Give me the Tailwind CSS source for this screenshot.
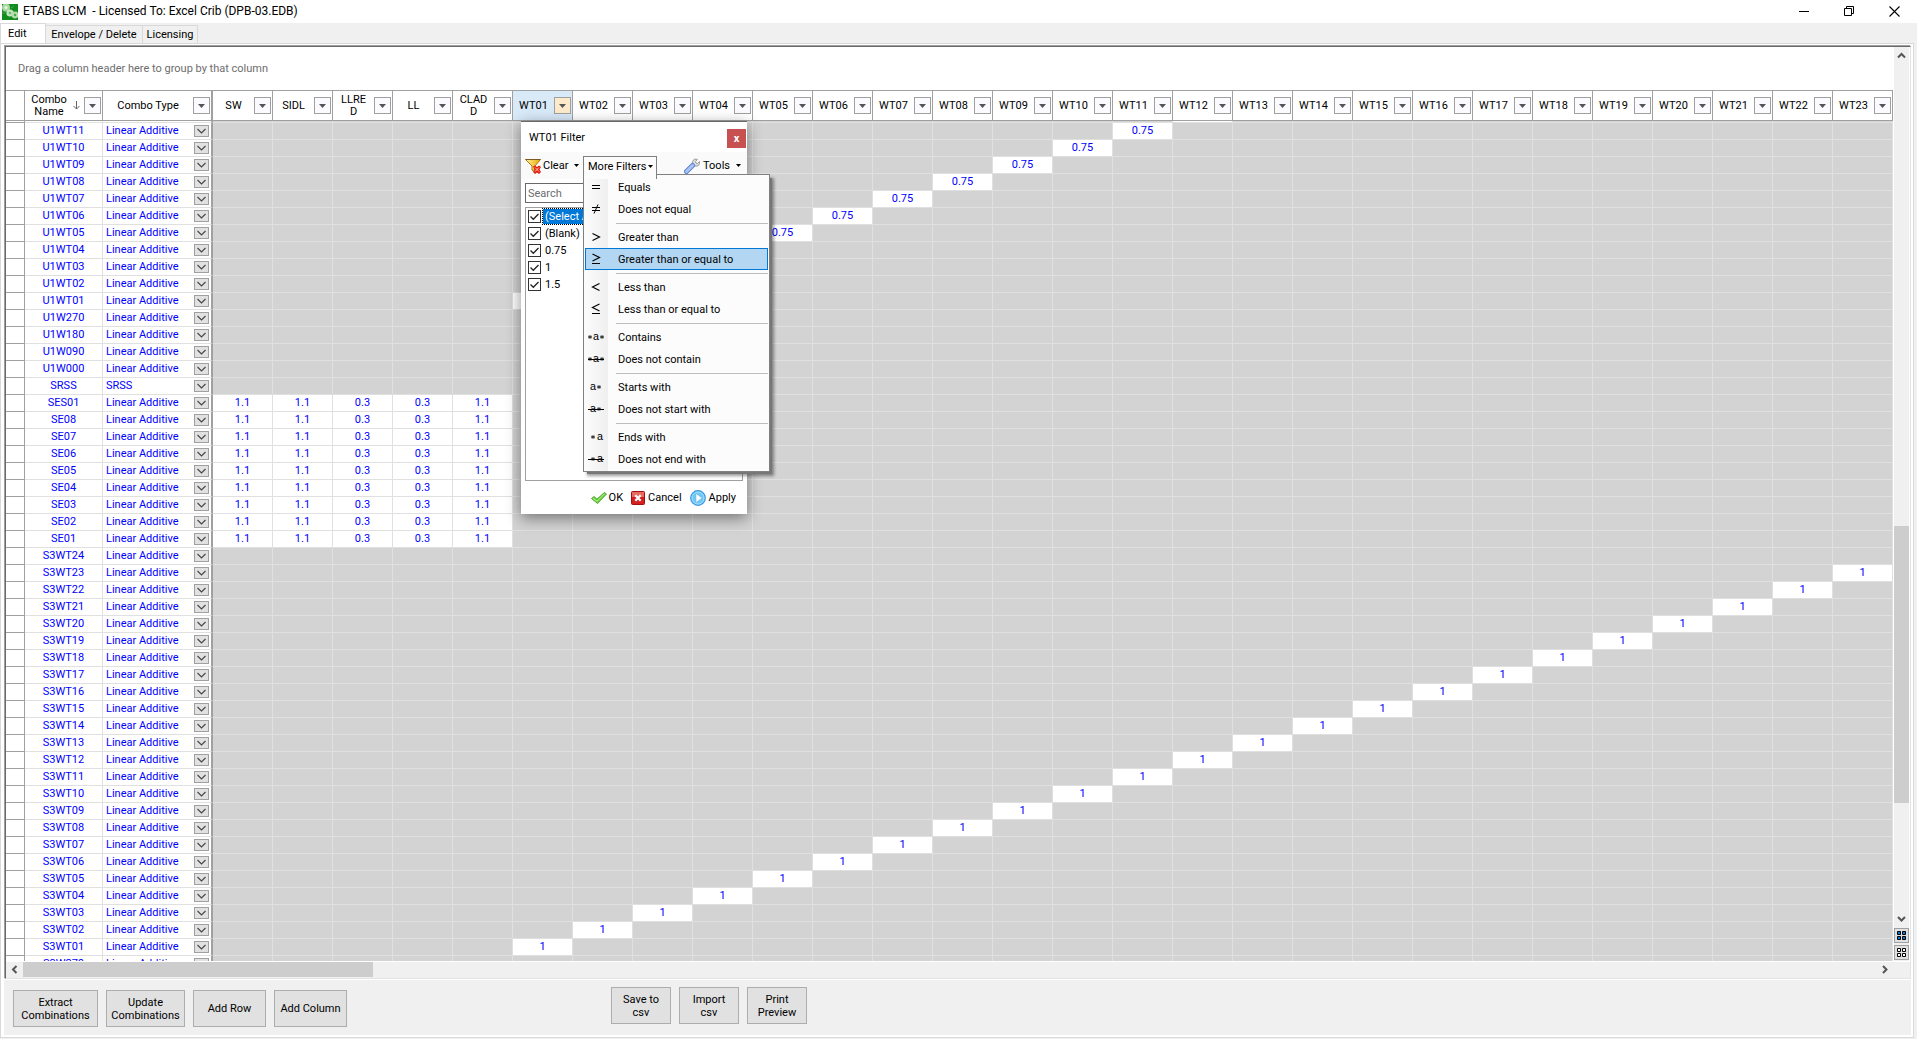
<!DOCTYPE html>
<html lang="en">
<head>
    <meta charset="UTF-8">
    <meta name="viewport" content="width=device-width, initial-scale=1.0">
    <title>ETABS LCM</title>
    <script src="https://cdn.jsdelivr.net/npm/@tailwindcss/browser@4"></script>
</head>
<body class="h-screen flex flex-col overflow-hidden bg-[#f0f0f0] text-black text-[11px] leading-[13px] font-['Roboto','Liberation_Sans',sans-serif]">

    <!-- title bar -->
    <header class="h-[23px] shrink-0 bg-white flex items-center text-[12px]">
        <svg class="ml-0.5 w-4 h-4" viewBox="0 0 16 16">
            <rect width="16" height="16" fill="#128c1e"/>
            <circle cx="4" cy="3.5" r="4" fill="#a8d8a0"/><circle cx="8" cy="9" r="3.6" fill="#c4e6be"/><circle cx="13" cy="11" r="3.4" fill="#b4dcac"/>
            <circle cx="4" cy="3.5" r="1.6" fill="#e4f5e0"/><circle cx="8" cy="9" r="1.3" fill="#6ab866"/><circle cx="13" cy="11" r="1.2" fill="#4aa64a"/>
            <path d="M0 8h3v1H0zM9 4l3-2" stroke="#4aa64a"/>
        </svg>
        <h1 class="ml-[5px] whitespace-pre">ETABS LCM  - Licensed To: Excel Crib (DPB-03.EDB)</h1>
        <div class="ml-auto flex items-center">
            <button aria-label="Minimize" class="w-[45px] h-5 flex items-center justify-center"><svg class="w-[11px] h-[11px]" viewBox="0 0 11 11"><path d="M0 5.5h10" stroke="#000"/></svg></button>
            <button aria-label="Restore" class="w-[45px] h-5 flex items-center justify-center"><svg class="w-[11px] h-[11px]" viewBox="0 0 11 11" fill="none" stroke="#000"><path d="M.5 2.5h7v7h-7zM2.5 2.5v-2h7v7h-2"/></svg></button>
            <button aria-label="Close" class="w-[45px] h-5 flex items-center justify-center"><svg class="w-[11px] h-[11px]" viewBox="0 0 11 11"><path d="M.5.5l10 10M10.5.5l-10 10" stroke="#000" stroke-width="1.1"/></svg></button>
        </div>
    </header>

    <!-- tabs -->
    <nav class="h-5 shrink-0 flex items-end">
        <button class="h-5 w-[46px] bg-white border-l border-t border-r border-[#d9d9d9] pl-[7px] pb-px text-left">Edit</button>
        <button class="h-[18px] w-[97px] border-t border-r border-[#d9d9d9]">Envelope / Delete</button>
        <button class="h-[18px] w-[55px] border-t border-r border-[#d9d9d9]">Licensing</button>
    </nav>

    <main class="flex-1 min-h-0 flex flex-col mr-[3px] mb-px bg-[#f0f0f0] border border-[#d9d9d9]">
        <div class="flex-1 min-h-0 flex flex-col border-3 border-t-1 border-r-2 border-b-2 border-white">

            <!-- grid -->
            <section class="relative flex-1 min-h-0 flex flex-col mt-px ml-px border-l border-t border-[#696969] border-r border-b border-r-[#e3e3e3] border-b-[#e3e3e3] shadow-[-1px_-1px_0_#a0a0a0] bg-white">
                <div class="flex-1 min-h-0 flex">
                    <div class="flex-1 min-w-0 overflow-hidden">
                        <div class="h-[43px] flex items-center pl-3 text-[#6d6d6d]">Drag a column header here to group by that column</div>
                        <table class="table-fixed border-separate border-spacing-0 w-[1887px]">
                            <colgroup id="cols"></colgroup>
                            <thead id="head"></thead>
                            <tbody id="rows"></tbody>
                        </table>
                    </div>
                    <!-- vertical scroll bar -->
                    <div class="w-[17px] shrink-0 border-x border-white bg-[#f0f0f0] flex flex-col">
                        <button aria-label="Scroll up" class="h-[17px] flex items-center justify-center"><svg class="w-[9px] h-[9px]" viewBox="0 0 9 9"><path d="M1 6.5L4.500 3 8 6.500" fill="none" stroke="#555" stroke-width="2"/></svg></button>
                        <div class="grow-[462] basis-0"></div>
                        <div class="grow-[277] basis-0 bg-[#cdcdcd]"></div>
                        <div class="grow-[107] basis-0"></div>
                        <button aria-label="Scroll down" class="h-[17px] flex items-center justify-center"><svg class="w-[9px] h-[9px]" viewBox="0 0 9 9"><path d="M1 3l3.500 3.500L8 3" fill="none" stroke="#555" stroke-width="2"/></svg></button>
                        <button aria-label="Split view" class="h-[15px] mt-px border border-[#a0a0a0] bg-[#e1e1e1] flex items-center justify-center"><svg class="w-[9px] h-[9px]" viewBox="0 0 9 9"><path d="M.5.5h3v3h-3zM5.500.5h3v3h-3zM.5 5.500h3v3h-3zM5.500 5.500h3v3h-3z" fill="#0078d7" stroke="#000"/></svg></button>
                        <button aria-label="Single view" class="h-[15px] mt-0.5 mb-px border border-[#a0a0a0] bg-[#e1e1e1] flex items-center justify-center"><svg class="w-[9px] h-[9px]" viewBox="0 0 9 9"><path d="M.5.5h3v3h-3zM5.500.5h3v3h-3zM.5 5.500h3v3h-3zM5.500 5.500h3v3h-3z" fill="#fff" stroke="#000"/></svg></button>
                    </div>
                </div>
                <!-- horizontal scroll bar -->
                <div class="h-[17px] shrink-0 pb-px border-t border-white bg-[#f0f0f0] flex">
                    <button aria-label="Scroll left" class="w-[17px] flex items-center justify-center"><svg class="w-[9px] h-[9px]" viewBox="0 0 9 9"><path d="M6.500 1L3 4.500 6.500 8" fill="none" stroke="#555" stroke-width="2"/></svg></button>
                    <div class="grow-[350] basis-0 bg-[#cdcdcd]"></div>
                    <div class="grow-[1503] basis-0"></div>
                    <button aria-label="Scroll right" class="w-[17px] mr-[17px] flex items-center justify-center"><svg class="w-[9px] h-[9px]" viewBox="0 0 9 9"><path d="M3 1l3.500 3.500L3 8" fill="none" stroke="#555" stroke-width="2"/></svg></button>
                </div>

                <!-- WT01 filter popup -->
                <div class="absolute left-[515px] top-[74px] w-[226px] h-[393px] flex flex-col bg-white border-t border-[#696969] shadow-[0_4px_14px_rgba(0,0,0,0.45)]">
                    <div class="h-[30px] shrink-0 flex items-center justify-between pl-2 pr-px">
                        <h2>WT01 Filter</h2>
                        <button aria-label="Close filter" class="w-[19px] h-[19px] mt-0.5 bg-[#c75050] text-white font-bold leading-none">x</button>
                    </div>
                    <div class="h-[27px] shrink-0 flex items-center bg-[#fafafa]">
                        <button class="flex items-center ml-1 w-[54px]">
                            <svg class="w-4 h-4" viewBox="0 0 16 16">
                                <defs><linearGradient id="fun"><stop offset="0" stop-color="#fff3a0"/><stop offset="1" stop-color="#e8a800"/></linearGradient></defs>
                                <path d="M.5 1.500h15L10 8v6L7 12V8z" fill="url(#fun)" stroke="#b07818"/>
                                <path d="M.5 1.500h15" stroke="#7a5a20"/>
                                <path d="M8 8.500l2-1 2 1.500 2-1.500 2 1.500-1.500 2.500L16 14l-2 2-2-1.500L10 16l-2-2 1.500-2.500z" fill="#e02010"/>
                                <path d="M10 9.500l4 4M14 9.500l-4 4" stroke="#ffc0b0"/>
                            </svg>
                            <span class="ml-0.5">Clear</span>
                            <svg class="ml-auto w-[5px] h-[3px]" viewBox="0 0 5 3"><path d="M0 0h5L2.500 3z"/></svg>
                        </button>
                        <button aria-expanded="true" class="relative z-20 flex items-center self-end ml-1 w-[74px] h-[23px] pl-1 pb-1 bg-[#fcfcfc] border border-b-0 border-[#808080] whitespace-nowrap">
                            More Filters
                            <svg class="ml-auto mr-[3px] w-[5px] h-[3px]" viewBox="0 0 5 3"><path d="M0 0h5L2.500 3z"/></svg>
                        </button>
                        <button class="flex items-center ml-auto mr-[6px]">
                            <svg class="w-4 h-4" viewBox="0 0 16 16">
                                <path d="M9.500 7a3.500 3.500 0 0 1 2.500-6l1.500.5-2 2 .5 1.500 1.500.5 2-2a3.500 3.500 0 0 1-4.500 4.500z" fill="#dcdcdc" stroke="#8c8c8c" stroke-width=".8"/>
                                <path d="M2.500 13.500l6-6" stroke="#5f86cf" stroke-width="5" stroke-linecap="round"/>
                                <path d="M2.500 13.500l6-6" stroke="#a9c5f5" stroke-width="3" stroke-linecap="round"/>
                            </svg>
                            <span class="ml-[3px]">Tools</span>
                            <svg class="ml-1.5 w-[5px] h-[3px]" viewBox="0 0 5 3"><path d="M0 0h5L2.500 3z"/></svg>
                        </button>
                    </div>
                    <input type="text" placeholder="Search" aria-label="Search" class="h-5 mt-1 mx-1 px-0.5 border border-[#696969] bg-white placeholder:text-[#6d6d6d] shrink-0">
                    <div id="values" class="flex-1 mt-1 mx-1 border border-[#a0a0a0]"></div>
                    <div class="h-[33px] shrink-0 flex items-center justify-end pr-[11px] gap-2">
                        <button class="flex items-center gap-0.5">
                            <svg class="w-4 h-4" viewBox="0 0 16 16"><path d="M.5 8.500L3 6.500l3 2.500 7.500-6.500 2 1.500L6.500 13.500z" fill="#6cd03c" stroke="#3a9a1c" stroke-width=".8"/><path d="M2 8.200l4 3 7.500-7.500" fill="none" stroke="#c8f5a8" stroke-width=".8"/></svg>
                            OK
                        </button>
                        <button class="flex items-center gap-[3px]">
                            <svg class="w-3.5 h-3.5" viewBox="0 0 14 14"><rect x=".5" y=".5" width="13" height="13" rx="1" fill="#d21f1f" stroke="#a01010"/><path d="M1 1h12v5H1z" fill="#e86a60"/><path d="M4.300 4.300l5.400 5.400M9.700 4.300l-5.400 5.400" stroke="#fff" stroke-width="2.200"/></svg>
                            Cancel
                        </button>
                        <button class="flex items-center gap-[3px]">
                            <svg class="w-4 h-4" viewBox="0 0 16 16"><circle cx="8" cy="8" r="7.300" fill="#6cc8f8" stroke="#3a96dc" stroke-width="1.200"/><circle cx="8" cy="8" r="6" fill="none" stroke="#b4e4ff" stroke-width=".8"/><path d="M6 3.500v9L12 8z" fill="#fff" stroke="#7ab8e0" stroke-width=".6"/></svg>
                            Apply
                        </button>
                    </div>

                    <!-- More Filters menu -->
                    <ul id="menu" class="absolute z-10 left-[62px] top-[52px] w-[187px] py-px border border-[#808080] bg-[linear-gradient(90deg,#fcfcfc,#efefef_24px,#fcfcfc_24px)] shadow-[3px_3px_0_-1px_#777,4px_4px_3px_rgba(0,0,0,0.4)]"></ul>
                </div>
            </section>

            <!-- actions -->
            <footer class="h-[56px] shrink-0 border-t border-white flex items-start gap-2 pl-[9px] pt-[7px]">
                <button class="mt-[3px] w-[85px] h-[37px] bg-[#e1e1e1] border border-[#adadad]">Extract<br>Combinations</button>
                <button class="mt-[3px] w-[79px] h-[37px] bg-[#e1e1e1] border border-[#adadad]">Update<br>Combinations</button>
                <button class="mt-[3px] w-[73px] h-[37px] bg-[#e1e1e1] border border-[#adadad]">Add Row</button>
                <button class="mt-[3px] w-[73px] h-[37px] bg-[#e1e1e1] border border-[#adadad]">Add Column</button>
                <button class="ml-64 w-[60px] h-[37px] bg-[#e1e1e1] border border-[#adadad]">Save to<br>csv</button>
                <button class="w-[60px] h-[37px] bg-[#e1e1e1] border border-[#adadad]">Import<br>csv</button>
                <button class="w-[60px] h-[37px] bg-[#e1e1e1] border border-[#adadad]">Print<br>Preview</button>
            </footer>
        </div>
    </main>

    <script>
        const pad = n => String(n).padStart(2, '0');
        const loadCols = ['SW', 'SIDL', 'LLRE<br>D', 'LL', 'CLAD<br>D'];
        for (let i = 1; i <= 23; i++) loadCols.push('WT' + pad(i));

        // combinations, newest first
        const combos = [];
        for (let i = 11; i >= 1; i--) combos.push({ name: 'U1WT' + pad(i), values: { [i + 4]: '0.75' } });
        ['270', '180', '090', '000'].forEach(a => combos.push({ name: 'U1W' + a, values: {} }));
        combos.push({ name: 'SRSS', type: 'SRSS', values: {} });
        const seismic = { 0: '1.1', 1: '1.1', 2: '0.3', 3: '0.3', 4: '1.1' };
        combos.push({ name: 'SES01', values: seismic });
        for (let i = 8; i >= 1; i--) combos.push({ name: 'SE' + pad(i), values: seismic });
        for (let i = 24; i >= 1; i--) combos.push({ name: 'S3WT' + pad(i), values: { [i + 4]: '1' } });
        combos.push({ name: 'S3W270', values: {} });

        function filterButton(active) {
            return `<button aria-label="Filter" class="shrink-0 w-[17px] h-[17px] mr-px flex items-center justify-center border border-[#a0a0a0] ${active ? 'bg-[#fdeacb]' : 'bg-[#fafaff]'}"><svg class="w-[7px] h-1" viewBox="0 0 7 4"><path d="M0 0h7L3.500 4z" fill="#555"/></svg></button>`;
        }

        function renderHead() {
            document.getElementById('cols').innerHTML = '<col class="w-[19px]"><col class="w-[78px]"><col class="w-[110px]">' + loadCols.map(() => '<col class="w-[60px]">').join('');
            const th = 'h-[31px] p-0 border-t border-b border-r border-[#a0a0a0] font-normal leading-[12px]';
            let html = `<th class="${th}"></th>
                <th class="${th}"><div class="flex items-center"><span class="flex-1">Combo<br>Name</span><svg class="w-[7px] h-[9px] mr-1" viewBox="0 0 7 9"><path d="M3.500 0v8M.5 5l3 3 3-3" fill="none" stroke="#666"/></svg>${filterButton(false)}</div></th>
                <th class="${th} border-r-2"><div class="flex items-center"><span class="flex-1">Combo Type</span>${filterButton(false)}</div></th>`;
            loadCols.forEach(c => {
                const active = c === 'WT01';
                html += `<th class="${th} ${active ? 'bg-[#d8e9f8]' : ''}"><div class="flex items-center"><span class="flex-1">${c}</span>${filterButton(active)}</div></th>`;
            });
            document.getElementById('head').innerHTML = `<tr>${html}</tr>`;
        }

        function renderRows() {
            // sliver of the row that is scrolled under the header
            let html = '<tr><td class="h-0.5 p-0 border-b border-r border-[#a0a0a0]"></td><td class="p-0 border-b border-r border-[#e0e0e0]"></td><td class="p-0 border-b border-b-[#e0e0e0] border-r-2 border-r-[#a0a0a0]"></td>';
            html += loadCols.map(c => `<td class="p-0 border-b border-r border-[#e0e0e0] ${c === 'WT12' ? 'bg-white' : 'bg-[#d3d3d3]'}"></td>`).join('') + '</tr>';
            combos.forEach(combo => {
                const type = combo.type || 'Linear Additive';
                html += `<tr class="text-[#0000ff] text-center leading-4">
                    <td class="h-[17px] p-0 border-b border-r border-[#a0a0a0]"></td>
                    <td class="p-0 border-b border-r border-[#e0e0e0]">${combo.name}</td>
                    <td class="p-0 border-b border-b-[#e0e0e0] border-r-2 border-r-[#a0a0a0]">
                        <div class="relative h-4">
                            <select aria-label="Combo type of ${combo.name}" class="appearance-none block w-full h-4 pl-[3px] bg-transparent leading-4"><option>${type}</option></select>
                            <svg class="absolute right-0.5 top-0.5 w-[15px] h-3 pointer-events-none" viewBox="0 0 15 12"><rect x=".5" y=".5" width="14" height="11" fill="#e1e1e1" stroke="#a0a0a0"/><path d="M3.500 4l4 4 4-4" fill="none" stroke="#444" stroke-width="1.100"/></svg>
                        </div>
                    </td>`;
                loadCols.forEach((c, i) => {
                    const v = combo.values[i];
                    html += `<td class="p-0 border-b border-r border-[#e0e0e0] ${v ? 'bg-white' : 'bg-[#d3d3d3]'}">${v || ''}</td>`;
                });
                html += '</tr>';
            });
            document.getElementById('rows').innerHTML = html;
        }

        function renderValues() {
            document.getElementById('values').innerHTML = ['(Select All)', '(Blank)', '0.75', '1', '1.5'].map((v, i) => `
                <label class="flex items-center h-[17px] pl-0.5">
                    <span class="relative w-[13px] h-[13px]">
                        <input type="checkbox" checked class="appearance-none block w-[13px] h-[13px] border border-[#333] bg-white">
                        <svg class="absolute inset-0 pointer-events-none" viewBox="0 0 13 13"><path d="M2.500 6.500l2.800 2.800L10.500 4" fill="none" stroke="#222" stroke-width="1.300"/></svg>
                    </span>
                    <span class="ml-0.5 px-0.5 h-[15px] leading-[15px] ${i === 0 ? 'bg-[#0078d7] text-white outline-1 outline-dotted outline-black' : ''}">${v}</span>
                </label>`).join('');
        }

        const star = x => `<path d="M${x} 6v4M${x - 2} 7l4 2M${x + 2} 7l-4 2" stroke="#000" stroke-width=".7"/>`;
        const letter = x => `<text x="${x}" y="11" text-anchor="middle" font-family="Liberation Mono" font-size="11">a</text>`;
        const strike = '<path d="M0 8.500h16" stroke="#000"/>';
        const icons = {
            eq: '<path d="M4 6.500h8M4 9.500h8" stroke="#000"/>',
            ne: '<path d="M4 6.500h8M4 9.500h8M10 3.500l-4 9" stroke="#000"/>',
            gt: '<path d="M4.500 4.500l7 3.500-7 3.500" fill="none" stroke="#000" stroke-width="1.200"/>',
            ge: '<path d="M4.500 3l7 3.500-7 3.500M4 12.500h8" fill="none" stroke="#000" stroke-width="1.200"/>',
            lt: '<path d="M11.500 4.500l-7 3.500 7 3.500" fill="none" stroke="#000" stroke-width="1.200"/>',
            le: '<path d="M11.500 3l-7 3.500 7 3.500M4 12.500h8" fill="none" stroke="#000" stroke-width="1.200"/>',
            has: star(2) + letter(8) + star(14),
            hasNot: star(2) + letter(8) + star(14) + strike,
            starts: letter(5) + star(11),
            startsNot: letter(5) + star(11) + strike,
            ends: star(5) + letter(12),
            endsNot: star(5) + letter(12) + strike
        };

        function renderMenu() {
            const items = [
                ['eq', 'Equals'], ['ne', 'Does not equal'], null,
                ['gt', 'Greater than'], ['ge', 'Greater than or equal to'], null,
                ['lt', 'Less than'], ['le', 'Less than or equal to'], null,
                ['has', 'Contains'], ['hasNot', 'Does not contain'], null,
                ['starts', 'Starts with'], ['startsNot', 'Does not start with'], null,
                ['ends', 'Ends with'], ['endsNot', 'Does not end with']
            ];
            document.getElementById('menu').innerHTML = items.map(item => {
                if (!item) return '<li class="h-1.5 ml-8 mr-px flex items-center"><hr class="flex-1 border-[#bdbdbd]"></li>';
                const hot = item[0] === 'ge';
                return `<li><button class="flex items-center w-[183px] h-[22px] ml-px pl-0.5 border ${hot ? 'bg-[#b3d7f3] border-[#0078d7]' : 'border-transparent'}"><svg class="w-4 h-4" viewBox="0 0 16 16">${icons[item[0]]}</svg><span class="ml-[14px]">${item[1]}</span></button></li>`;
            }).join('');
        }

        renderHead();
        renderRows();
        renderValues();
        renderMenu();
    </script>
</body>
</html>
